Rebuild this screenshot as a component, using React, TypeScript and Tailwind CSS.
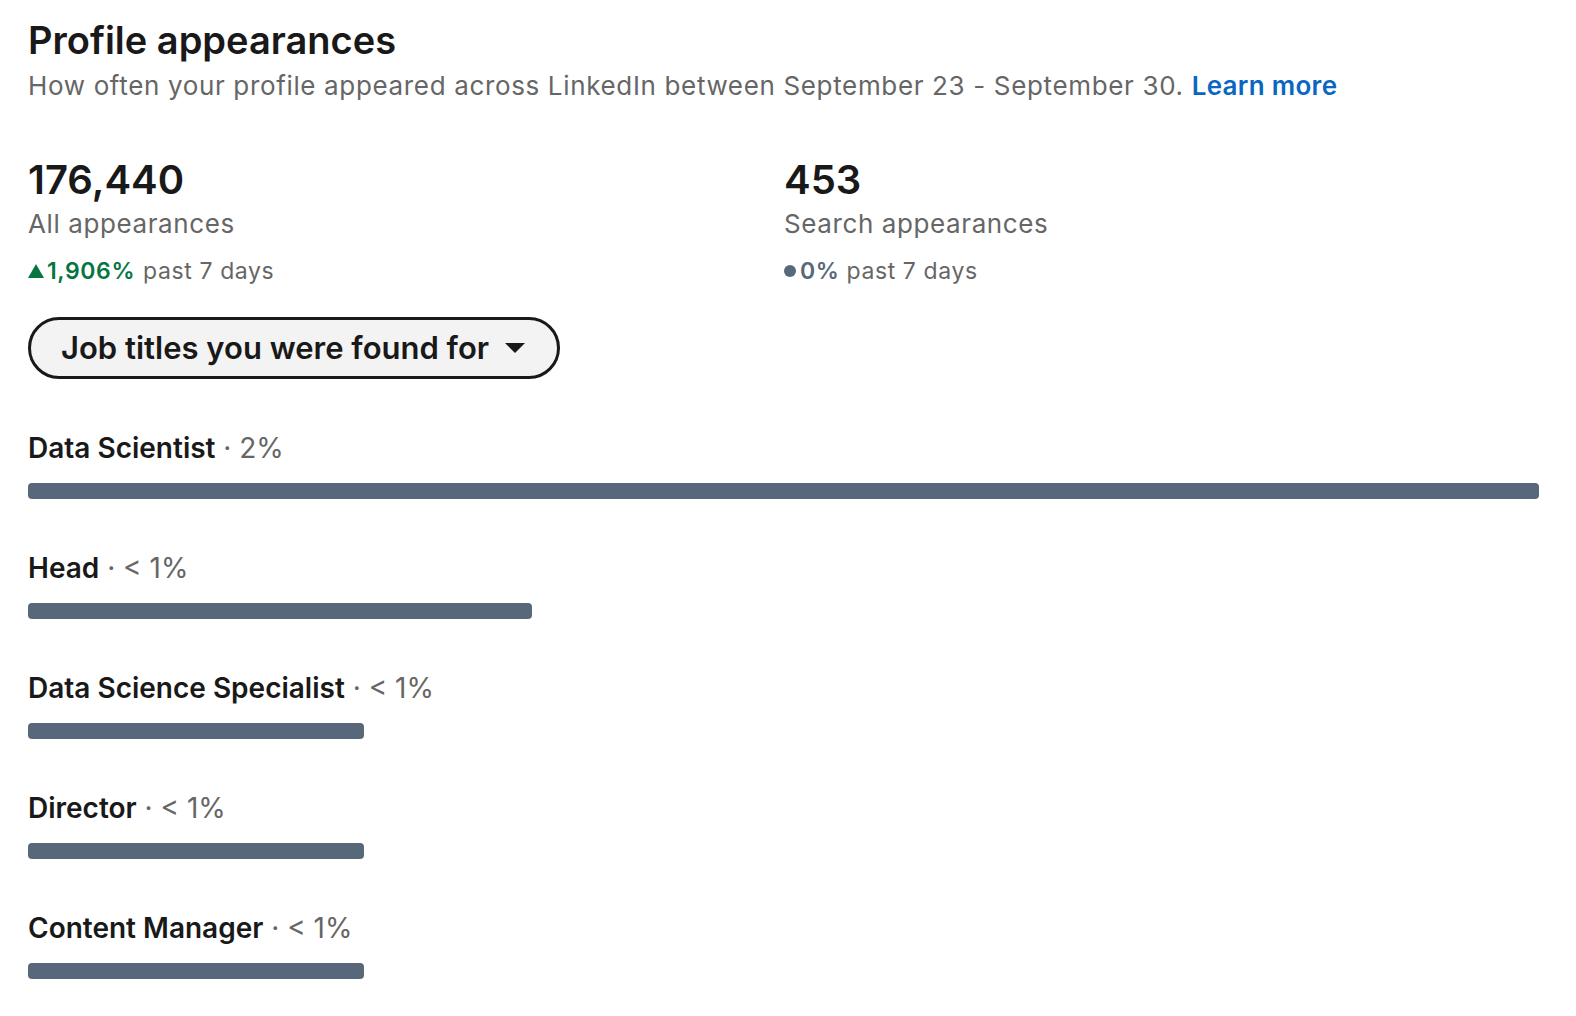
import React from "react";

const rows = [
  { title: "Data Scientist", pct: "2%", w: "100%" },
  { title: "Head", pct: "< 1%", w: "33.35%" },
  { title: "Data Science Specialist", pct: "< 1%", w: "22.24%" },
  { title: "Director", pct: "< 1%", w: "22.24%" },
  { title: "Content Manager", pct: "< 1%", w: "22.24%" },
];

export default function App() {
  return (
    <div
      className="min-h-[1016px] w-[1576px] bg-white pl-[28px] pr-[37px] pt-[18px] text-[#191919]"
      style={{ fontFamily: "Inter, 'Noto Sans', sans-serif" }}
    >
      <h1 className="h-[44px] whitespace-nowrap text-[38px] font-semibold leading-[44px]">
        Profile appearances
      </h1>
      <p className="mt-[8px] h-[32px] whitespace-nowrap text-[26px] leading-[32px] tracking-[0.65px] text-[#666666]">
        How often your profile appeared across LinkedIn between September 23 - September 30.{" "}
        <span className="font-semibold tracking-[0.3px] text-[#0a66c2]">Learn more</span>
      </p>

      <div className="mt-[54px] grid grid-cols-[756px_1fr]">
        <div>
          <div className="h-[48px] text-[40px] font-semibold leading-[48px]">176,440</div>
          <div className="mt-[4px] h-[32px] text-[26px] leading-[32px] tracking-[0.6px] text-[#666666]">All appearances</div>
          <div className="mt-[17px] flex h-[28px] items-center text-[23px] leading-[28px] tracking-[0.6px]">
            <svg width="16" height="14" viewBox="0 0 16 14" className="mr-[3px]">
              <path d="M8 0 L16 14 L0 14 Z" fill="#057642" />
            </svg>
            <span className="font-semibold text-[#057642]">1,906%</span>
            <span className="ml-[8px] text-[#666666]">past 7 days</span>
          </div>
        </div>
        <div>
          <div className="h-[48px] text-[40px] font-semibold leading-[48px]">453</div>
          <div className="mt-[4px] h-[32px] text-[26px] leading-[32px] tracking-[0.6px] text-[#666666]">Search appearances</div>
          <div className="mt-[17px] flex h-[28px] items-center text-[23px] leading-[28px] tracking-[0.6px]">
            <span className="mr-[4px] inline-block h-[12px] w-[12px] rounded-full bg-[#56687a]" />
            <span className="font-semibold text-[#56687a]">0%</span>
            <span className="ml-[7px] text-[#666666]">past 7 days</span>
          </div>
        </div>
      </div>

      <button className="mt-[32px] flex h-[62px] items-center whitespace-nowrap rounded-full border-[3px] border-[#191919] bg-[#f3f3f3] pl-[30px] pr-[32px] text-[31px] font-semibold text-[#191919]">
        <span>Job titles you were found for</span>
        <svg width="20" height="12" viewBox="0 0 20 12" className="ml-[16px]">
          <path d="M0 1 L20 1 L10 11 Z" fill="#191919" />
        </svg>
      </button>

      <div className="flex flex-col">
        {rows.map((r) => (
          <div key={r.title} className="mt-[53px]">
            <div className="h-[32px] whitespace-nowrap text-[28px] leading-[32px]">
              <span className="font-semibold text-[#191919]">{r.title}</span>
              <span className="text-[#666666]"> · {r.pct}</span>
            </div>
            <div className="mt-[19px] h-[16px] w-full">
              <div className="h-[16px] rounded-[4px] bg-[#56687a]" style={{ width: r.w }} />
            </div>
          </div>
        ))}
      </div>
    </div>
  );
}
